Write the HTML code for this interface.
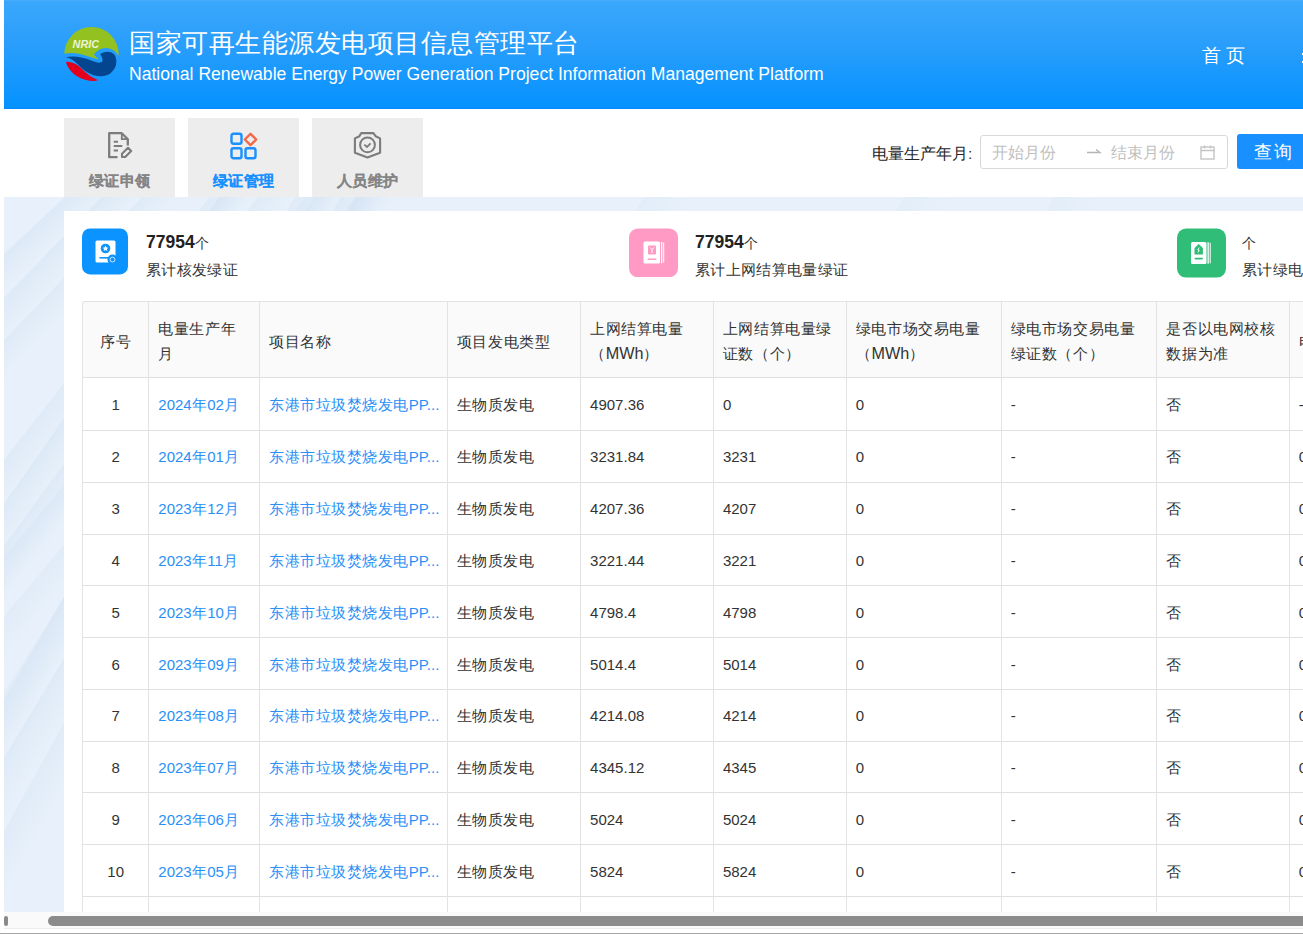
<!DOCTYPE html><html><head><meta charset='utf-8'><style>
*{box-sizing:border-box;margin:0;padding:0}
html,body{width:1303px;height:934px;overflow:hidden;background:#fff;font-family:"Liberation Sans", sans-serif;position:relative}
.a{position:absolute;white-space:nowrap}
.hdr{left:4px;top:0;width:1299px;height:109px;background:linear-gradient(180deg,#52b1f9 0px,#3aa7fc 1px,#2a9efb 40%,#0592ff 98%,#0088fe 100%)}
.tab{top:118px;width:111px;height:79px;background:#ededed}
.tabt{top:166.3px;height:30px;line-height:30px;font-size:15px;font-weight:bold;color:#858585;width:111px;text-align:center;-webkit-text-stroke:0.15px currentColor}
.bg{left:4px;top:197px;width:1299px;height:715px;background:#e8f1fb;overflow:hidden}
.card{left:64px;top:211px;width:1239px;height:701px;background:#fff}
.num{font-size:17.5px;font-weight:bold;color:#222;line-height:24px;height:24px}
.num span{font-size:14px;font-weight:normal;color:#333}
.lbl{font-size:15.2px;color:#333;line-height:24px;height:24px}
.th{font-size:15.4px;color:#333;line-height:25px}
.td{font-size:15px;color:#333;line-height:24px;height:24px}
.lk{color:#2a8ff7}
.vl{width:1px;background:#e3e3e3}
.hl{height:1px;background:#e0e0e0}
</style></head><body>
<div class='a hdr'></div>
<svg class='a' style='left:60px;top:24px' width='64' height='64' viewBox='60 24 64 64'>
<defs><clipPath id='lc'><circle cx='91.5' cy='54.2' r='27.2'/></clipPath></defs>
<g clip-path='url(#lc)'>
<path d='M60 24 H124 V55.6 L118.3 55.6 C116 51, 111 48, 105.3 48.1 C100 48.3, 96 51.5, 94 54.8 C96 56.8, 97.8 58.3, 99 59.6 C93 58.2, 86 55.6, 80 54 C73 52.3, 66 53, 60 54.5 Z' fill='#93c11f'/>
<path d='M66 57.5 C72 55.5, 82 57, 90 60 C95 62, 100 64, 102.3 61.5 C103.5 59.5, 101.5 56.5, 100.3 54.2 C103 51.5, 108 51, 111.5 52.5 C116 54.5, 117 60, 116 65 C115 71, 110 75.5, 102 76.2 C92 76.8, 84 71, 77 63.5 C73 59.5, 70 58, 66 57.5 Z' fill='#03458f'/>
<path d='M66 61.8 C72 61.5, 77 64, 81 68 C86 73, 92 78.5, 99.5 80.2 C93 82, 84 80.5, 77.5 76.5 C71 72.5, 67 67, 66 61.8 Z' fill='#e4001c'/>
</g>
<text x='72.6' y='47.6' font-family='Liberation Sans' font-size='10.8' font-style='italic' font-weight='bold' fill='#eef5d8'>NRIC</text>
</svg>
<div class='a' style='left:129px;top:22px;height:42px;line-height:42px;font-size:26.4px;color:#fff'><span style='letter-spacing:0.5px'>国家可再生能源发电项目信息管理平台</span></div>
<div class='a' style='left:129px;top:61px;height:26px;line-height:26px;font-size:17.58px;color:#fff'>National Renewable Energy Power Generation Project Information Management Platform</div>
<div class='a' style='left:1202px;top:42px;height:28px;line-height:28px;font-size:19px;color:#fff;letter-spacing:5px'>首页</div>
<div class='a' style='left:1301.5px;top:52.5px;width:2px;height:2px;background:#fff'></div><div class='a' style='left:1301.5px;top:60.5px;width:2px;height:2px;background:#fff'></div>
<div class='a tab' style='left:64px'></div>
<div class='a tab' style='left:188px'></div>
<div class='a tab' style='left:312px'></div>
<svg class='a' style='left:106px;top:130px' width='28' height='30' viewBox='0 0 28 30'>
<path d='M11.5 27.2 H3.2 V3.2 H15.8 L21.8 9.2 V15.5' fill='none' stroke='#7c7c7c' stroke-width='2.3' stroke-linejoin='round'/>
<path d='M15.8 3.2 V9.2 H21.8' fill='none' stroke='#7c7c7c' stroke-width='1.8'/>
<path d='M7.7 11.7 H12 M7.7 16 H16.3 M7.7 20.6 H12' stroke='#7c7c7c' stroke-width='2'/>
<path d='M16 27 V23.8 L22 17.8 L25.2 21 L19.2 27 Z' fill='none' stroke='#7c7c7c' stroke-width='2.1' stroke-linejoin='round'/>
</svg>
<svg class='a' style='left:230px;top:131.5px' width='29' height='29' viewBox='0 0 29 29'>
<rect x='1.5' y='1.8' width='10' height='10' rx='2' fill='none' stroke='#1890ff' stroke-width='2.4'/>
<rect x='1.5' y='16.3' width='10' height='10' rx='2' fill='none' stroke='#1890ff' stroke-width='2.4'/>
<rect x='15.5' y='16.3' width='10' height='10' rx='2' fill='none' stroke='#1890ff' stroke-width='2.4'/>
<path d='M20.5 1.8 L26.2 7.5 L20.5 13.2 L14.8 7.5 Z' fill='none' stroke='#f2694b' stroke-width='2.4' stroke-linejoin='round'/>
</svg>
<svg class='a' style='left:352px;top:130px' width='31' height='30' viewBox='0 0 31 30'>
<path d='M9.2 3.1 H21.4 L23.6 6.2 L28.1 8.4 V22.8 L15.5 27.4 L2.9 22.8 V8.4 L7.4 6.2 Z' fill='none' stroke='#7c7c7c' stroke-width='2.1' stroke-linejoin='round'/>
<circle cx='15.5' cy='14.9' r='7.4' fill='none' stroke='#7c7c7c' stroke-width='2'/>
<path d='M12.3 14.6 L15 17 L18.6 13.4' fill='none' stroke='#7c7c7c' stroke-width='1.8'/>
</svg>
<div class='a tabt' style='left:64px'><span style='letter-spacing:0.5px;margin-right:-0.5px'>绿证申领</span></div>
<div class='a tabt' style='left:188px;color:#1890ff'><span style='letter-spacing:0.5px;margin-right:-0.5px'>绿证管理</span></div>
<div class='a tabt' style='left:312px'><span style='letter-spacing:0.5px;margin-right:-0.5px'>人员维护</span></div>
<div class='a' style='left:872px;top:141.6px;height:24px;line-height:24px;font-size:15.5px;color:#262626'>电量生产年月:</div>
<div class='a' style='left:980px;top:135px;width:248px;height:34px;border:1px solid #d9d9d9;border-radius:3px;background:#fff'></div>
<div class='a' style='left:992px;top:141.2px;height:24px;line-height:24px;font-size:15.5px;color:#bfbfbf'>开始月份</div>
<div class='a' style='left:1111px;top:141.2px;height:24px;line-height:24px;font-size:15.5px;color:#bfbfbf'>结束月份</div>
<svg class='a' style='left:1086px;top:145px' width='16' height='10' viewBox='0 0 16 10'>
<path d='M1 7.5 H14 L10 4.5' fill='none' stroke='#b5b5b5' stroke-width='1.4'/></svg>
<svg class='a' style='left:1199px;top:144px' width='17' height='17' viewBox='0 0 17 17'>
<rect x='2' y='3' width='13' height='12' fill='none' stroke='#c4c4c4' stroke-width='1.4'/>
<path d='M2 6.5 H15 M5.5 1.5 V4.5 M11.5 1.5 V4.5' stroke='#c4c4c4' stroke-width='1.4'/></svg>
<div class='a' style='left:1237px;top:134px;width:80px;height:35px;background:#1890ff;border-radius:3px'></div>
<div class='a' style='left:1254px;top:138px;height:28px;line-height:28px;font-size:18px;color:#fff;letter-spacing:2px'>查询</div>
<div class='a bg'><div class='a' style='left:0.4px;top:57.0px;width:30px;height:2400px;transform-origin:0 0;transform:rotate(47deg) translateY(-1200px);background:linear-gradient(90deg,rgba(196,216,236,0.33),rgba(196,216,236,0))'></div><div class='a' style='left:0.4px;top:101.0px;width:30px;height:2400px;transform-origin:0 0;transform:rotate(44deg) translateY(-1200px);background:linear-gradient(90deg,rgba(196,216,236,0.30),rgba(196,216,236,0))'></div><div class='a' style='left:0.4px;top:143.0px;width:28px;height:2400px;transform-origin:0 0;transform:rotate(44deg) translateY(-1200px);background:linear-gradient(90deg,rgba(196,216,236,0.27),rgba(196,216,236,0))'></div><div class='a' style='left:0.2px;top:263.0px;width:30px;height:2400px;transform-origin:0 0;transform:rotate(38deg) translateY(-1200px);background:linear-gradient(90deg,rgba(196,216,236,0.27),rgba(196,216,236,0))'></div><div class='a' style='left:0.2px;top:307.0px;width:30px;height:2400px;transform-origin:0 0;transform:rotate(35deg) translateY(-1200px);background:linear-gradient(90deg,rgba(196,216,236,0.30),rgba(196,216,236,0))'></div><div class='a' style='left:0.2px;top:349.0px;width:30px;height:2400px;transform-origin:0 0;transform:rotate(36deg) translateY(-1200px);background:linear-gradient(90deg,rgba(196,216,236,0.27),rgba(196,216,236,0))'></div><div class='a' style='left:23.9px;top:462.0px;width:35px;height:2400px;transform-origin:0 0;transform:rotate(30deg) translateY(-1200px);background:linear-gradient(90deg,rgba(196,216,236,0.24),rgba(196,216,236,0))'></div><div class='a' style='left:0.2px;top:495.5px;width:30px;height:2400px;transform-origin:0 0;transform:rotate(32deg) translateY(-1200px);background:linear-gradient(90deg,rgba(196,216,236,0.21),rgba(196,216,236,0))'></div><div class='a' style='left:0.2px;top:560.6px;width:35px;height:2400px;transform-origin:0 0;transform:rotate(31deg) translateY(-1200px);background:linear-gradient(90deg,rgba(196,216,236,0.27),rgba(196,216,236,0))'></div><div class='a' style='left:0.2px;top:634.0px;width:35px;height:2400px;transform-origin:0 0;transform:rotate(29deg) translateY(-1200px);background:linear-gradient(90deg,rgba(196,216,236,0.24),rgba(196,216,236,0))'></div><div class='a' style='left:296.0px;top:7.0px;width:30px;height:2400px;transform-origin:0 0;transform:rotate(40deg) translateY(-1200px);background:linear-gradient(90deg,rgba(196,216,236,0.21),rgba(196,216,236,0))'></div><div class='a' style='left:346.0px;top:7.0px;width:30px;height:2400px;transform-origin:0 0;transform:rotate(40deg) translateY(-1200px);background:linear-gradient(90deg,rgba(196,216,236,0.21),rgba(196,216,236,0))'></div><div class='a' style='left:636.0px;top:7.0px;width:40px;height:2400px;transform-origin:0 0;transform:rotate(30deg) translateY(-1200px);background:linear-gradient(90deg,rgba(196,216,236,0.18),rgba(196,216,236,0))'></div><div class='a' style='left:896.0px;top:7.0px;width:40px;height:2400px;transform-origin:0 0;transform:rotate(28deg) translateY(-1200px);background:linear-gradient(90deg,rgba(196,216,236,0.15),rgba(196,216,236,0))'></div><div class='a' style='left:1046.0px;top:7.0px;width:40px;height:2400px;transform-origin:0 0;transform:rotate(28deg) translateY(-1200px);background:linear-gradient(90deg,rgba(196,216,236,0.15),rgba(196,216,236,0))'></div></div>
<div class='a card'></div>
<svg class='a' style='left:82px;top:228px' width='46' height='47' viewBox='0 0 46 47'>
<rect x='0' y='0.4' width='46' height='46' rx='8' fill='#0b93ff'/>
<rect x='13.5' y='12.5' width='20' height='22' rx='1.5' fill='#fff'/>
<circle cx='23.5' cy='20.5' r='4.8' fill='#0b93ff'/>
<path d='M23.5 17.6 L24.4 19.6 L26.4 19.8 L24.9 21.1 L25.3 23.1 L23.5 22.1 L21.7 23.1 L22.1 21.1 L20.6 19.8 L22.6 19.6 Z' fill='#fff'/>
<rect x='17.5' y='29' width='10' height='1.6' fill='#0b93ff'/>
<circle cx='30.5' cy='31.6' r='5' fill='#0b93ff'/>
<circle cx='30.5' cy='31.6' r='2.4' fill='none' stroke='#cfe8ff' stroke-width='1'/>
</svg>
<svg class='a' style='left:629px;top:228px' width='49' height='49' viewBox='0 0 49 49'>
<rect x='0' y='0.4' width='49' height='49' rx='9' fill='#ff9ac4'/>
<rect x='14.5' y='13.5' width='16.5' height='22' rx='1.5' fill='#fff'/>
<rect x='32' y='13.8' width='1.3' height='21.5' fill='#fff'/>
<rect x='34.2' y='14.5' width='1' height='20' fill='#fff'/>
<rect x='19' y='17.5' width='8' height='9' rx='1' fill='#ff9ac4'/>
<path d='M21 19.5 L23 21.5 L25 19.5 M23 21.5 V25' stroke='#fff' stroke-width='1' fill='none'/>
<rect x='18.5' y='30.5' width='9' height='1.6' rx='.8' fill='#ff9ac4'/>
</svg>
<svg class='a' style='left:1177px;top:228px' width='49' height='50' viewBox='0 0 49 50'>
<rect x='0' y='0.6' width='49' height='49' rx='9' fill='#30bd78'/>
<rect x='14' y='14' width='15.5' height='22' rx='1.5' fill='#fff'/>
<rect x='30.5' y='14.2' width='1.3' height='21.5' fill='#fff'/>
<rect x='32.7' y='14.8' width='1' height='20.5' fill='#fff'/>
<path d='M17.5 26.5 V20 L21.7 16 L25.9 20 V26.5 Z' fill='#30bd78'/>
<path d='M22.2 19.5 L20.8 22 L22.2 22 L21 24.5' stroke='#fff' stroke-width='.9' fill='none'/>
<rect x='17.5' y='29.8' width='8.5' height='1.6' rx='.8' fill='#30bd78'/>
</svg>
<div class='a num' style='left:146px;top:230px'>77954<span>个</span></div>
<div class='a lbl' style='left:146px;top:258px'><span style='letter-spacing:0.35px'>累计核发绿证</span></div>
<div class='a num' style='left:695px;top:230px'>77954<span>个</span></div>
<div class='a lbl' style='left:695px;top:258px'><span style='letter-spacing:0.35px'>累计上网结算电量绿证</span></div>
<div class='a num' style='left:1242px;top:230px'><span>个</span></div>
<div class='a lbl' style='left:1242px;top:258px'><span style='letter-spacing:0.35px'>累计绿电交易绿证</span></div>
<div class='a' style='left:82px;top:301px;width:1300px;height:77px;background:#fafafa;border-top:1px solid #e3e3e3;border-left:1px solid #e3e3e3;border-radius:3px 0 0 0'></div>
<div class='a hl' style='left:82px;top:377px;width:1300px'></div>
<div class='a hl' style='left:82px;top:430px;width:1300px'></div>
<div class='a hl' style='left:82px;top:482px;width:1300px'></div>
<div class='a hl' style='left:82px;top:534px;width:1300px'></div>
<div class='a hl' style='left:82px;top:585px;width:1300px'></div>
<div class='a hl' style='left:82px;top:637px;width:1300px'></div>
<div class='a hl' style='left:82px;top:689px;width:1300px'></div>
<div class='a hl' style='left:82px;top:741px;width:1300px'></div>
<div class='a hl' style='left:82px;top:792px;width:1300px'></div>
<div class='a hl' style='left:82px;top:844px;width:1300px'></div>
<div class='a hl' style='left:82px;top:896px;width:1300px'></div>
<div class='a vl' style='left:82px;top:305px;height:607px'></div>
<div class='a vl' style='left:148px;top:301px;height:611px'></div>
<div class='a vl' style='left:259px;top:301px;height:611px'></div>
<div class='a vl' style='left:447px;top:301px;height:611px'></div>
<div class='a vl' style='left:580px;top:301px;height:611px'></div>
<div class='a vl' style='left:713px;top:301px;height:611px'></div>
<div class='a vl' style='left:846px;top:301px;height:611px'></div>
<div class='a vl' style='left:1001px;top:301px;height:611px'></div>
<div class='a vl' style='left:1156px;top:301px;height:611px'></div>
<div class='a vl' style='left:1289px;top:301px;height:611px'></div>
<div class='a th' style='left:82.5px;width:66.30000000000001px;text-align:center;top:328.9px'><span style='letter-spacing:0.6px'>序号</span></div>
<div class='a th' style='left:158.3px;top:316.2px'><span style='letter-spacing:0.6px'>电量生产年</span><br><span style='letter-spacing:0.6px'>月</span></div>
<div class='a th' style='left:269.3px;top:328.9px'><span style='letter-spacing:0.6px'>项目名称</span></div>
<div class='a th' style='left:456.9px;top:328.9px'><span style='letter-spacing:0.6px'>项目发电类型</span></div>
<div class='a th' style='left:590.1px;top:316.2px'><span style='letter-spacing:0.6px'>上网结算电量</span><br><span style='letter-spacing:0.6px'>（</span><span style='font-size:16.2px'>MWh</span><span style='letter-spacing:0.6px'>）</span></div>
<div class='a th' style='left:722.9px;top:316.2px'><span style='letter-spacing:0.6px'>上网结算电量绿</span><br><span style='letter-spacing:0.6px'>证数（个）</span></div>
<div class='a th' style='left:855.8px;top:316.2px'><span style='letter-spacing:0.6px'>绿电市场交易电量</span><br><span style='letter-spacing:0.6px'>（</span><span style='font-size:16.2px'>MWh</span><span style='letter-spacing:0.6px'>）</span></div>
<div class='a th' style='left:1010.7px;top:316.2px'><span style='letter-spacing:0.6px'>绿电市场交易电量</span><br><span style='letter-spacing:0.6px'>绿证数（个）</span></div>
<div class='a th' style='left:1166.4px;top:316.2px'><span style='letter-spacing:0.6px'>是否以电网校核</span><br><span style='letter-spacing:0.6px'>数据为准</span></div>
<div class='a th' style='left:1298.7px;top:328.9px'><span style='letter-spacing:0.6px'>电</span></div>
<div class='a td' style='left:82.5px;width:66.3px;text-align:center;top:393.42px'>1</div>
<div class='a td lk' style='left:158.3px;top:393.42px'>2024<span style='letter-spacing:0.5px'>年</span>02<span style='letter-spacing:0.5px'>月</span></div>
<div class='a td lk' style='left:269.3px;top:393.42px'><span style='letter-spacing:0.5px'>东港市垃圾焚烧发电</span>PP...</div>
<div class='a td' style='left:456.9px;top:393.42px'><span style='letter-spacing:0.5px'>生物质发电</span></div>
<div class='a td' style='left:590.1px;top:393.42px'>4907.36</div>
<div class='a td' style='left:722.9px;top:393.42px'>0</div>
<div class='a td' style='left:855.8px;top:393.42px'>0</div>
<div class='a td' style='left:1010.7px;top:393.42px'>-</div>
<div class='a td' style='left:1166.4px;top:393.42px'><span style='letter-spacing:0.5px'>否</span></div>
<div class='a td' style='left:1298.7px;top:393.42px'>-</div>
<div class='a td' style='left:82.5px;width:66.3px;text-align:center;top:445.25px'>2</div>
<div class='a td lk' style='left:158.3px;top:445.25px'>2024<span style='letter-spacing:0.5px'>年</span>01<span style='letter-spacing:0.5px'>月</span></div>
<div class='a td lk' style='left:269.3px;top:445.25px'><span style='letter-spacing:0.5px'>东港市垃圾焚烧发电</span>PP...</div>
<div class='a td' style='left:456.9px;top:445.25px'><span style='letter-spacing:0.5px'>生物质发电</span></div>
<div class='a td' style='left:590.1px;top:445.25px'>3231.84</div>
<div class='a td' style='left:722.9px;top:445.25px'>3231</div>
<div class='a td' style='left:855.8px;top:445.25px'>0</div>
<div class='a td' style='left:1010.7px;top:445.25px'>-</div>
<div class='a td' style='left:1166.4px;top:445.25px'><span style='letter-spacing:0.5px'>否</span></div>
<div class='a td' style='left:1298.7px;top:445.25px'>0</div>
<div class='a td' style='left:82.5px;width:66.3px;text-align:center;top:497.08px'>3</div>
<div class='a td lk' style='left:158.3px;top:497.08px'>2023<span style='letter-spacing:0.5px'>年</span>12<span style='letter-spacing:0.5px'>月</span></div>
<div class='a td lk' style='left:269.3px;top:497.08px'><span style='letter-spacing:0.5px'>东港市垃圾焚烧发电</span>PP...</div>
<div class='a td' style='left:456.9px;top:497.08px'><span style='letter-spacing:0.5px'>生物质发电</span></div>
<div class='a td' style='left:590.1px;top:497.08px'>4207.36</div>
<div class='a td' style='left:722.9px;top:497.08px'>4207</div>
<div class='a td' style='left:855.8px;top:497.08px'>0</div>
<div class='a td' style='left:1010.7px;top:497.08px'>-</div>
<div class='a td' style='left:1166.4px;top:497.08px'><span style='letter-spacing:0.5px'>否</span></div>
<div class='a td' style='left:1298.7px;top:497.08px'>0</div>
<div class='a td' style='left:82.5px;width:66.3px;text-align:center;top:548.90px'>4</div>
<div class='a td lk' style='left:158.3px;top:548.90px'>2023<span style='letter-spacing:0.5px'>年</span>11<span style='letter-spacing:0.5px'>月</span></div>
<div class='a td lk' style='left:269.3px;top:548.90px'><span style='letter-spacing:0.5px'>东港市垃圾焚烧发电</span>PP...</div>
<div class='a td' style='left:456.9px;top:548.90px'><span style='letter-spacing:0.5px'>生物质发电</span></div>
<div class='a td' style='left:590.1px;top:548.90px'>3221.44</div>
<div class='a td' style='left:722.9px;top:548.90px'>3221</div>
<div class='a td' style='left:855.8px;top:548.90px'>0</div>
<div class='a td' style='left:1010.7px;top:548.90px'>-</div>
<div class='a td' style='left:1166.4px;top:548.90px'><span style='letter-spacing:0.5px'>否</span></div>
<div class='a td' style='left:1298.7px;top:548.90px'>0</div>
<div class='a td' style='left:82.5px;width:66.3px;text-align:center;top:600.74px'>5</div>
<div class='a td lk' style='left:158.3px;top:600.74px'>2023<span style='letter-spacing:0.5px'>年</span>10<span style='letter-spacing:0.5px'>月</span></div>
<div class='a td lk' style='left:269.3px;top:600.74px'><span style='letter-spacing:0.5px'>东港市垃圾焚烧发电</span>PP...</div>
<div class='a td' style='left:456.9px;top:600.74px'><span style='letter-spacing:0.5px'>生物质发电</span></div>
<div class='a td' style='left:590.1px;top:600.74px'>4798.4</div>
<div class='a td' style='left:722.9px;top:600.74px'>4798</div>
<div class='a td' style='left:855.8px;top:600.74px'>0</div>
<div class='a td' style='left:1010.7px;top:600.74px'>-</div>
<div class='a td' style='left:1166.4px;top:600.74px'><span style='letter-spacing:0.5px'>否</span></div>
<div class='a td' style='left:1298.7px;top:600.74px'>0</div>
<div class='a td' style='left:82.5px;width:66.3px;text-align:center;top:652.57px'>6</div>
<div class='a td lk' style='left:158.3px;top:652.57px'>2023<span style='letter-spacing:0.5px'>年</span>09<span style='letter-spacing:0.5px'>月</span></div>
<div class='a td lk' style='left:269.3px;top:652.57px'><span style='letter-spacing:0.5px'>东港市垃圾焚烧发电</span>PP...</div>
<div class='a td' style='left:456.9px;top:652.57px'><span style='letter-spacing:0.5px'>生物质发电</span></div>
<div class='a td' style='left:590.1px;top:652.57px'>5014.4</div>
<div class='a td' style='left:722.9px;top:652.57px'>5014</div>
<div class='a td' style='left:855.8px;top:652.57px'>0</div>
<div class='a td' style='left:1010.7px;top:652.57px'>-</div>
<div class='a td' style='left:1166.4px;top:652.57px'><span style='letter-spacing:0.5px'>否</span></div>
<div class='a td' style='left:1298.7px;top:652.57px'>0</div>
<div class='a td' style='left:82.5px;width:66.3px;text-align:center;top:704.39px'>7</div>
<div class='a td lk' style='left:158.3px;top:704.39px'>2023<span style='letter-spacing:0.5px'>年</span>08<span style='letter-spacing:0.5px'>月</span></div>
<div class='a td lk' style='left:269.3px;top:704.39px'><span style='letter-spacing:0.5px'>东港市垃圾焚烧发电</span>PP...</div>
<div class='a td' style='left:456.9px;top:704.39px'><span style='letter-spacing:0.5px'>生物质发电</span></div>
<div class='a td' style='left:590.1px;top:704.39px'>4214.08</div>
<div class='a td' style='left:722.9px;top:704.39px'>4214</div>
<div class='a td' style='left:855.8px;top:704.39px'>0</div>
<div class='a td' style='left:1010.7px;top:704.39px'>-</div>
<div class='a td' style='left:1166.4px;top:704.39px'><span style='letter-spacing:0.5px'>否</span></div>
<div class='a td' style='left:1298.7px;top:704.39px'>0</div>
<div class='a td' style='left:82.5px;width:66.3px;text-align:center;top:756.23px'>8</div>
<div class='a td lk' style='left:158.3px;top:756.23px'>2023<span style='letter-spacing:0.5px'>年</span>07<span style='letter-spacing:0.5px'>月</span></div>
<div class='a td lk' style='left:269.3px;top:756.23px'><span style='letter-spacing:0.5px'>东港市垃圾焚烧发电</span>PP...</div>
<div class='a td' style='left:456.9px;top:756.23px'><span style='letter-spacing:0.5px'>生物质发电</span></div>
<div class='a td' style='left:590.1px;top:756.23px'>4345.12</div>
<div class='a td' style='left:722.9px;top:756.23px'>4345</div>
<div class='a td' style='left:855.8px;top:756.23px'>0</div>
<div class='a td' style='left:1010.7px;top:756.23px'>-</div>
<div class='a td' style='left:1166.4px;top:756.23px'><span style='letter-spacing:0.5px'>否</span></div>
<div class='a td' style='left:1298.7px;top:756.23px'>0</div>
<div class='a td' style='left:82.5px;width:66.3px;text-align:center;top:808.06px'>9</div>
<div class='a td lk' style='left:158.3px;top:808.06px'>2023<span style='letter-spacing:0.5px'>年</span>06<span style='letter-spacing:0.5px'>月</span></div>
<div class='a td lk' style='left:269.3px;top:808.06px'><span style='letter-spacing:0.5px'>东港市垃圾焚烧发电</span>PP...</div>
<div class='a td' style='left:456.9px;top:808.06px'><span style='letter-spacing:0.5px'>生物质发电</span></div>
<div class='a td' style='left:590.1px;top:808.06px'>5024</div>
<div class='a td' style='left:722.9px;top:808.06px'>5024</div>
<div class='a td' style='left:855.8px;top:808.06px'>0</div>
<div class='a td' style='left:1010.7px;top:808.06px'>-</div>
<div class='a td' style='left:1166.4px;top:808.06px'><span style='letter-spacing:0.5px'>否</span></div>
<div class='a td' style='left:1298.7px;top:808.06px'>0</div>
<div class='a td' style='left:82.5px;width:66.3px;text-align:center;top:859.88px'>10</div>
<div class='a td lk' style='left:158.3px;top:859.88px'>2023<span style='letter-spacing:0.5px'>年</span>05<span style='letter-spacing:0.5px'>月</span></div>
<div class='a td lk' style='left:269.3px;top:859.88px'><span style='letter-spacing:0.5px'>东港市垃圾焚烧发电</span>PP...</div>
<div class='a td' style='left:456.9px;top:859.88px'><span style='letter-spacing:0.5px'>生物质发电</span></div>
<div class='a td' style='left:590.1px;top:859.88px'>5824</div>
<div class='a td' style='left:722.9px;top:859.88px'>5824</div>
<div class='a td' style='left:855.8px;top:859.88px'>0</div>
<div class='a td' style='left:1010.7px;top:859.88px'>-</div>
<div class='a td' style='left:1166.4px;top:859.88px'><span style='letter-spacing:0.5px'>否</span></div>
<div class='a td' style='left:1298.7px;top:859.88px'>0</div>
<div class='a' style='left:4px;top:912px;width:1299px;height:17px;background:#fafafa;border-bottom:1px solid #ececec'></div>
<div class='a' style='left:4px;top:916px;width:3.6px;height:10px;background:#8a8a8a;border-radius:2px'></div>
<div class='a' style='left:48px;top:916px;width:1300px;height:9.5px;background:#8b8b8b;border-radius:5px'></div>
<div class='a' style='left:0;top:933px;width:1303px;height:1px;background:#a8a8a8'></div>
</body></html>
